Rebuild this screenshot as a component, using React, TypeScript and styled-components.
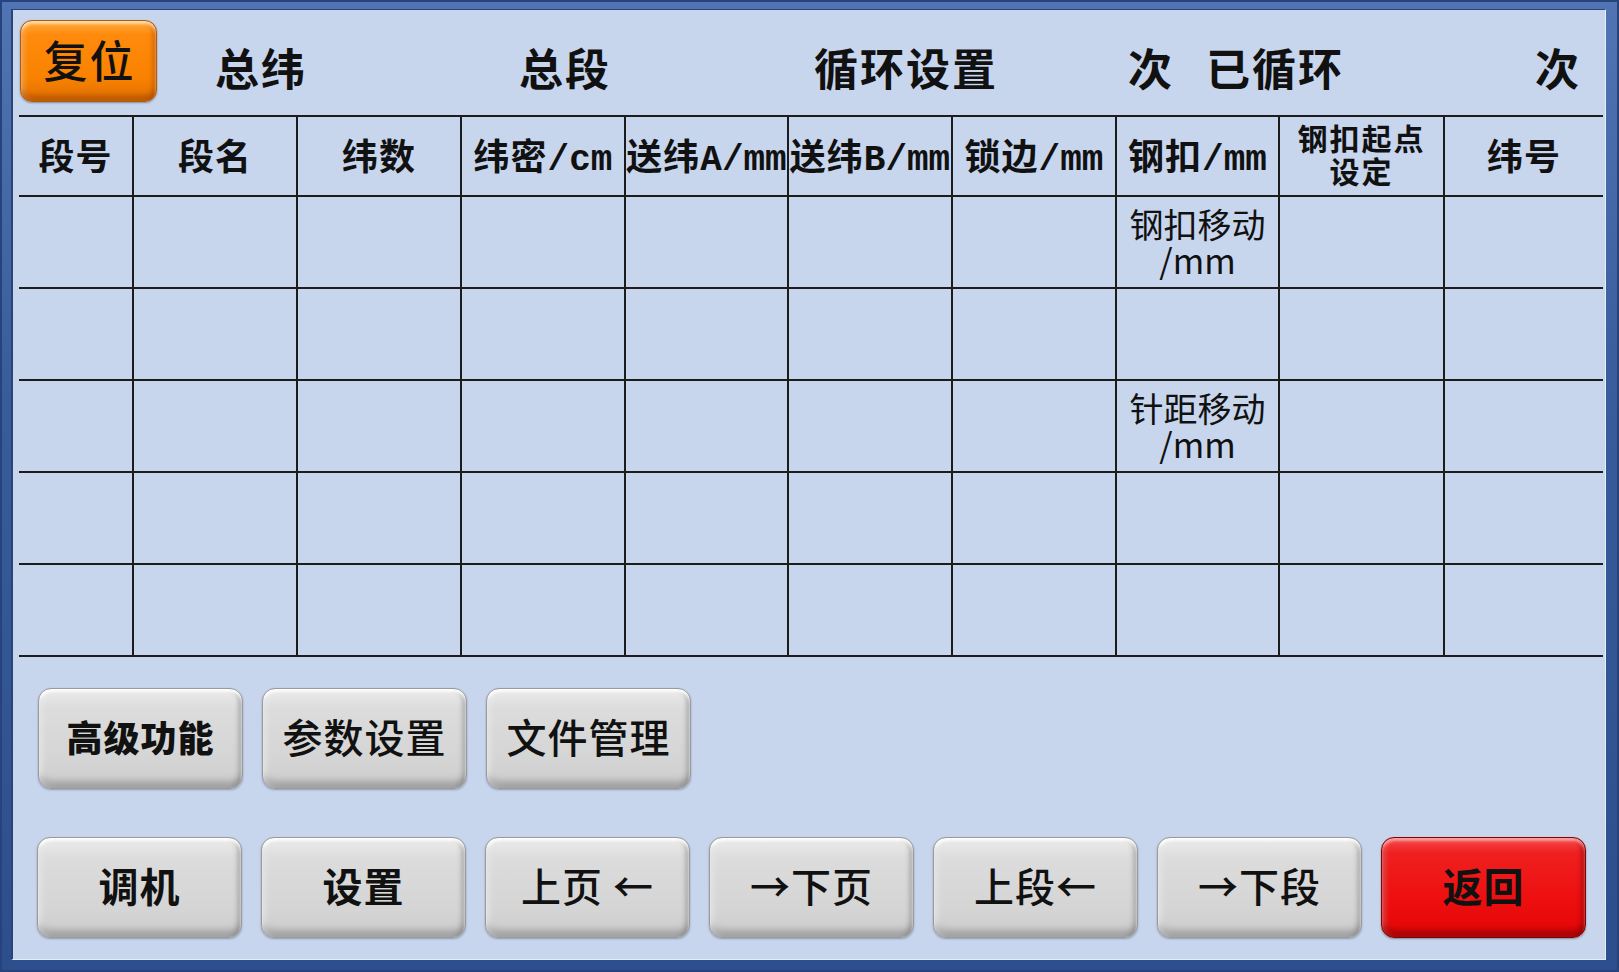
import React from "react";
import styled, { createGlobalStyle, css } from "styled-components";

const GlobalStyle = createGlobalStyle`
  html, body { margin: 0; padding: 0; background: #3a5c9c; }
  body { font-family: "Noto Sans CJK SC", "Noto Sans", sans-serif; }
  * { box-sizing: border-box; }
`;

const CJK = `"Noto Sans CJK SC", "Noto Sans", sans-serif`;

const Frame = styled.div`
  width: 1619px;
  height: 972px;
  padding: 9px 13px 12px 11px;
  background: linear-gradient(180deg, #5074b4 0%, #385c9c 40%, #2d4e8c 100%);
  box-shadow: inset 0 0 0 2px #26437c;
`;

const Panel = styled.div`
  width: 1595px;
  height: 951px;
  background: #c7d5ed;
  border-top: 1px solid #2a4478;
  border-left: 2px solid #2a4478;
  border-right: 1px solid #e8eef9;
  border-bottom: 1px solid #e8eef9;
  padding: 0 5px 0 4px;
  display: flex;
  flex-direction: column;
`;

const TopBar = styled.div`
  height: 105px;
  display: flex;
  align-items: flex-start;
`;

const ResetButton = styled.button`
  margin: 10px 0 0 3px;
  width: 137px;
  height: 82px;
  border-radius: 12px;
  border: 1px solid #b85a00;
  background: linear-gradient(180deg, #ffa83a 0%, #ff8a0c 18%, #f98200 70%, #e07000 100%);
  box-shadow:
    inset 0 3px 3px rgba(255, 235, 200, 0.8),
    inset 0 -6px 5px rgba(150, 60, 0, 0.45),
    inset -4px 0 4px rgba(170, 70, 0, 0.35),
    inset 4px 0 4px rgba(255, 210, 150, 0.4),
    0 1px 2px rgba(0, 0, 0, 0.35);
  font-family: ${CJK};
  font-size: 44px;
  font-weight: 500;
  letter-spacing: 2px;
  color: #111;
  padding: 0 0 4px 2px;
  cursor: pointer;
`;

const Label = styled.span`
  margin-top: 35px;
  font-family: ${CJK};
  font-size: 44px;
  line-height: 44px;
  font-weight: 700;
  letter-spacing: 2px;
  color: #111;
  white-space: nowrap;
`;

const ValueSlot = styled.span<{ $w: number }>`
  display: block;
  flex: none;
  width: ${(p) => p.$w}px;
  height: 44px;
`;

const Table = styled.div`
  display: grid;
  grid-template-columns: 115px 164px 164px 164px 163px 164px 164px 163px 165px 158px;
  grid-template-rows: 80px repeat(5, 92px);
  width: 1584px;
  margin-left: 2px;
  border-top: 2px solid #1c1c1c;
`;

const Cell = styled.div<{ $last?: boolean }>`
  border-bottom: 2px solid #1c1c1c;
  border-right: ${(p) => (p.$last ? "none" : "2px solid #1c1c1c")};
  display: flex;
  flex-direction: column;
  align-items: center;
  justify-content: center;
  white-space: nowrap;
  color: #111;
`;

const HeadText = styled.div<{ $small?: boolean }>`
  font-family: ${CJK};
  font-weight: 700;
  font-size: ${(p) => (p.$small ? 30 : 36)}px;
  letter-spacing: ${(p) => (p.$small ? 2 : 1)}px;
  text-align: center;
  padding-bottom: 4px;
  display: flex;
  flex-direction: column;
  align-items: center;
`;

/* One line of a stacked caption; lines sit tighter than the font's own leading */
const Line = styled.span<{ $h: number }>`
  display: block;
  height: ${(p) => p.$h}px;
  line-height: ${(p) => p.$h}px;
`;

/* Half-width unit suffix such as /mm */
const Unit = styled.span`
  font-family: "Liberation Mono", monospace;
  font-weight: 700;
  letter-spacing: 0;
`;

const BodyText = styled.div`
  font-family: ${CJK};
  font-weight: 400;
  font-size: 34px;
  text-align: center;
  display: flex;
  flex-direction: column;
  align-items: center;
`;

const ButtonRow = styled.div<{ $top: number; $gap: number; $left: number }>`
  display: flex;
  margin-top: ${(p) => p.$top}px;
  padding-left: ${(p) => p.$left}px;
  gap: ${(p) => p.$gap}px;
`;

type Tone = "gray" | "red";

const PanelButton = styled.button<{ $tone?: Tone; $weight?: number; $size?: number }>`
  width: 205px;
  height: 101px;
  flex: none;
  border-radius: 13px;
  font-family: ${CJK};
  font-size: ${(p) => p.$size ?? 40}px;
  font-weight: ${(p) => p.$weight ?? 700};
  letter-spacing: 1px;
  color: #111;
  padding: 0 0 6px;
  cursor: pointer;
  white-space: nowrap;
  ${(p) =>
    p.$tone === "red"
      ? css`
          border: 1px solid #8a0000;
          background: linear-gradient(180deg, #f44a4a 0%, #ef2020 15%, #ee1010 60%, #e40606 100%);
          box-shadow:
            inset 0 3px 3px rgba(255, 190, 190, 0.75),
            inset 0 -7px 6px rgba(120, 0, 0, 0.55),
            inset -4px 0 4px rgba(120, 0, 0, 0.35),
            inset 4px 0 4px rgba(255, 140, 140, 0.4),
            0 1px 2px rgba(0, 0, 0, 0.35);
        `
      : css`
          border: 1px solid #9b9b9b;
          background: linear-gradient(180deg, #ececec 0%, #dcdcdc 20%, #d4d4d4 75%, #cbcbcb 100%);
          box-shadow:
            inset 0 3px 3px rgba(255, 255, 255, 0.95),
            inset 0 -7px 6px rgba(90, 90, 90, 0.35),
            inset -4px 0 4px rgba(110, 110, 110, 0.3),
            inset 4px 0 4px rgba(255, 255, 255, 0.6),
            0 1px 2px rgba(40, 50, 80, 0.35);
        `}
`;

type HeadCol = { lines: React.ReactNode[]; small?: boolean };

const headers: HeadCol[] = [
  { lines: ["段号"] },
  { lines: ["段名"] },
  { lines: ["纬数"] },
  { lines: [<>纬密<Unit>/cm</Unit></>] },
  { lines: [<>送纬<Unit>A/mm</Unit></>] },
  { lines: [<>送纬<Unit>B/mm</Unit></>] },
  { lines: [<>锁边<Unit>/mm</Unit></>] },
  { lines: [<>钢扣<Unit>/mm</Unit></>] },
  { lines: ["钢扣起点", "设定"], small: true },
  { lines: ["纬号"] },
];

// Notes shown inside the 钢扣/mm column, keyed by row index
const columnNotes: Record<number, string> = {
  0: "钢扣移动",
  2: "针距移动",
};

const NOTE_COL = 7;

export default function App() {
  const rows = [0, 1, 2, 3, 4];
  return (
    <>
      <GlobalStyle />
      <Frame>
        <Panel>
          <TopBar>
            <ResetButton>复位</ResetButton>
            <ValueSlot $w={58} />
            <Label>总纬</Label>
            <ValueSlot $w={212} />
            <Label>总段</Label>
            <ValueSlot $w={203} />
            <Label>循环设置</Label>
            <ValueSlot $w={130} />
            <Label>次</Label>
            <ValueSlot $w={32} />
            <Label>已循环</Label>
            <ValueSlot $w={191} />
            <Label>次</Label>
          </TopBar>

          <Table>
            {headers.map((h, i) => (
              <Cell key={`h${i}`} $last={i === headers.length - 1}>
                <HeadText $small={h.small}>
                  {h.lines.map((l, k) => (
                    <Line key={k} $h={h.small ? 33 : 40}>
                      {l}
                    </Line>
                  ))}
                </HeadText>
              </Cell>
            ))}
            {rows.map((r) =>
              headers.map((_, c) => (
                <Cell key={`r${r}c${c}`} $last={c === headers.length - 1}>
                  {c === NOTE_COL && columnNotes[r] ? (
                    <BodyText>
                      <Line $h={36}>{columnNotes[r]}</Line>
                      <Line $h={36}>/mm</Line>
                    </BodyText>
                  ) : null}
                </Cell>
              ))
            )}
          </Table>

          <ButtonRow $top={31} $gap={19} $left={21}>
            <PanelButton $weight={900} $size={36}>高级功能</PanelButton>
            <PanelButton $weight={500}>参数设置</PanelButton>
            <PanelButton $weight={500}>文件管理</PanelButton>
          </ButtonRow>

          <ButtonRow $top={48} $gap={19} $left={20}>
            <PanelButton>调机</PanelButton>
            <PanelButton>设置</PanelButton>
            <PanelButton $weight={500}>上页 ←</PanelButton>
            <PanelButton $weight={500}>→下页</PanelButton>
            <PanelButton $weight={500}>上段←</PanelButton>
            <PanelButton $weight={500}>→下段</PanelButton>
            <PanelButton $tone="red">返回</PanelButton>
          </ButtonRow>
        </Panel>
      </Frame>
    </>
  );
}
